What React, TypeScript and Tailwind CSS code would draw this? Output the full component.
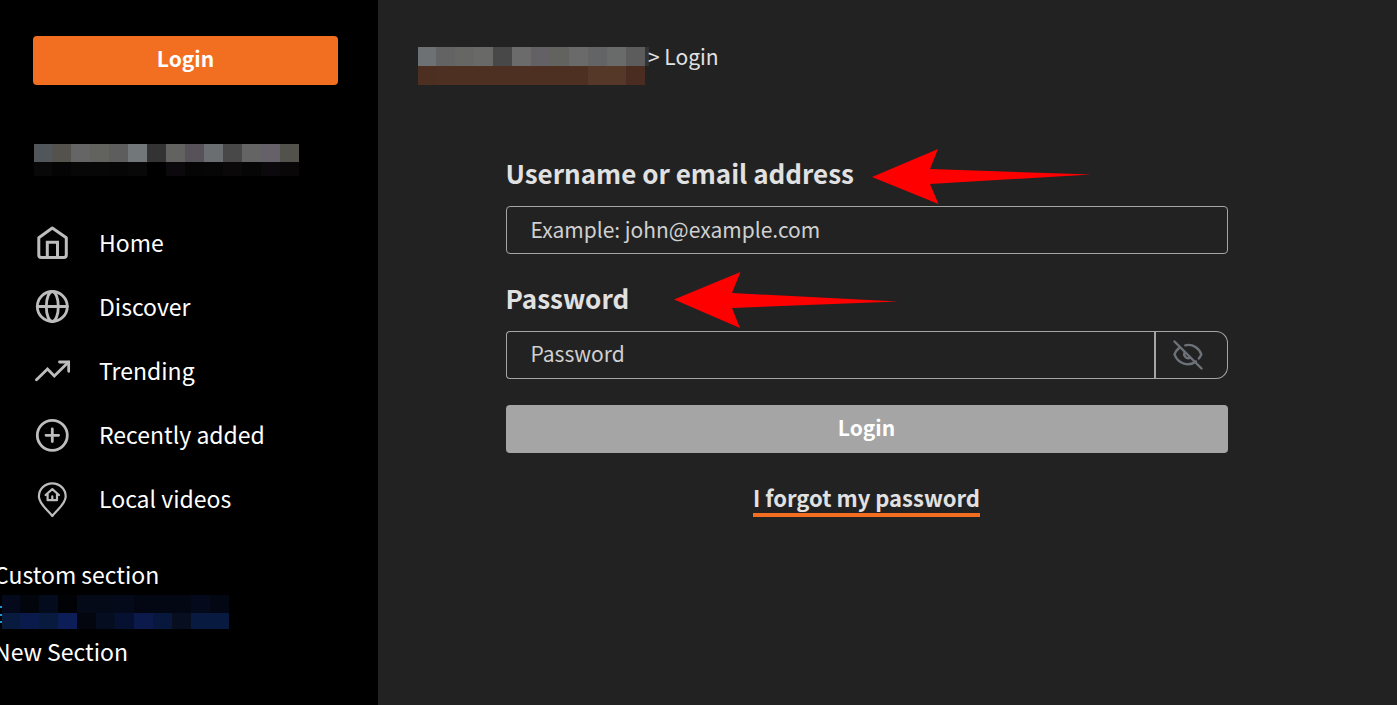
import { useState, type ReactNode } from 'react';

type NavItem = {
  label: string;
  icon: ReactNode;
};

const NAV_ITEMS: NavItem[] = [
  {
    label: 'Home',
    icon: (
      <g strokeWidth="3">
        <path d="M18.3 3 32.3 12.8V30a2.6 2.6 0 0 1-2.6 2.6H7.4A2.6 2.6 0 0 1 4.8 30V12.8Z" />
        <path d="M13.3 32.6V17.2h10.2v15.4" strokeLinejoin="miter" />
      </g>
    ),
  },
  {
    label: 'Discover',
    icon: (
      <g strokeWidth="2.8">
        <circle cx="18.3" cy="17.5" r="15" />
        <ellipse cx="18.3" cy="17.5" rx="6" ry="15" />
        <path d="M3.3 17.5h30" />
      </g>
    ),
  },
  {
    label: 'Trending',
    icon: (
      <g strokeWidth="2.8" strokeLinejoin="miter">
        <path d="M2.5 26.8 13.5 16l6.8 7L34.3 9.3" />
        <path d="M25.5 9h9.2v9.3" />
      </g>
    ),
  },
  {
    label: 'Recently added',
    icon: (
      <g strokeWidth="2.8">
        <circle cx="18.3" cy="18.3" r="15" />
        <path d="M18.3 12v12.6M12 18.3h12.6" />
      </g>
    ),
  },
  {
    label: 'Local videos',
    icon: (
      <g strokeWidth="2.2">
        <path d="M18.3 35C14.5 29.600 4.9 23 4.9 15.400a13.4 13.1 0 0 1 26.8 0c0 7.6-9.6 14.200-13.4 19.600Z" />
        <path d="m11.6 14 6.7-5.8 6.7 5.8M13.6 12.5v6.7h9.4v-6.7M18.3 19v-3.6" />
      </g>
    ),
  },
];

const ACCOUNT_MOSAIC = [
  ['#50565a', '#54524c', '#656565', '#62625f', '#5d5d5d', '#72777a', '#333333', '#626261', '#57515a', '#6b6e70', '#484848', '#646464', '#666169', '#53514c'],
  ['#080808', '#040404', '#070707', '#070707', '#060606', '#080808', '#000000', '#0b090b', '#050505', '#060606', '#0a0809', '#060606', '#0b090b', '#090708'],
];

const SECTION_MOSAIC = [
  ['#040a1b', '#02050c', '#040b1c', '#010206', '#040a18', '#040a18', '#050a1a', '#030613', '#030613', '#030613', '#040a1b', '#030613'],
  ['#081a3e', '#0a1a4a', '#081a3e', '#0d1d57', '#03050f', '#050d20', '#061030', '#0b1a4a', '#08183c', '#060e20', '#081a40', '#081a40'],
];

const SITE_MOSAIC = [
  ['#6d7174', '#636363', '#666664', '#696968', '#484849', '#6b6b6b', '#646166', '#62625e', '#6a6a6a', '#626466', '#696b6b', '#5c5c5c'],
  ['#4c2f20', '#4d3021', '#4d3021', '#4d3021', '#4d3021', '#4d3021', '#4d3021', '#4d3021', '#4d3021', '#553828', '#553828', '#4a2d20'],
];

type MosaicProps = {
  rows: string[][];
  heights: number[];
  children?: ReactNode;
};

function Mosaic({ rows, heights, children }: MosaicProps) {
  // the first column is one pixel narrower than the others
  const width = rows[0].length * 19 - 1;
  const height = heights[0] + heights[1];

  return (
    <svg width={width} height={height} className="block shrink-0 overflow-visible" shapeRendering="crispEdges" aria-hidden="true">
      {rows.map((row, r) =>
        row.map((fill, c) => (
          <rect
            key={`${r}-${c}`}
            x={c === 0 ? 0 : c * 19 - 1}
            y={r === 0 ? 0 : heights[0]}
            width={c === 0 ? 18 : 19}
            height={heights[r]}
            fill={fill}
          />
        )),
      )}
      {children}
    </svg>
  );
}

function Sidebar() {
  return (
    <aside className="w-[378px] shrink-0 overflow-hidden bg-black pt-9 text-white">
      <div className="pr-10 pl-[33px]">
        <button type="button" className="h-[49px] w-full rounded bg-[#f26f21] pb-1.5 text-[21px] leading-8 font-semibold">
          Login
        </button>
      </div>

      <div className="mt-[59px] pl-[34px]">
        <Mosaic rows={ACCOUNT_MOSAIC} heights={[18, 14]} />
      </div>

      <nav className="mt-[35px]">
        {NAV_ITEMS.map(item => (
          <a key={item.label} href="#" className="flex h-16 items-center gap-[29px] pl-[34px] text-[23px] leading-9">
            <svg
              width="36"
              height="36"
              viewBox="0 0 36 36"
              fill="none"
              stroke="#bdbdbd"
              strokeLinecap="round"
              strokeLinejoin="round"
              aria-hidden="true"
            >
              {item.icon}
            </svg>
            <span className="pb-0.5">{item.label}</span>
          </a>
        ))}
      </nav>

      <div className="mt-[25px] text-[23px] leading-9">
        <p className="-ml-1.5">Custom section</p>
        <div className="mt-[3px] mb-1 pl-0.5">
          <Mosaic rows={SECTION_MOSAIC} heights={[18, 16]}>
            <path d="M-2 11h2v2h-2zM-2 19h2v2h-2zM-2 26h2v2h-2z" fill="#1c9ad6" />
          </Mosaic>
        </div>
        <p className="-ml-1.5">New Section</p>
      </div>
    </aside>
  );
}

export default function App() {
  const [username, setUsername] = useState('');
  const [password, setPassword] = useState('');
  const [visible, setVisible] = useState(false);

  return (
    <div className="flex min-h-screen bg-[#222222] font-['Noto_Sans_CJK_JP',sans-serif] text-[#e1e1e1]">
      <Sidebar />

      <main className="min-w-0 flex-1 pt-[38px] pr-[82px] pl-10">
        <div className="flex h-[46px] items-start text-[21px] leading-9">
          <div className="pt-[9px]">
            <Mosaic rows={SITE_MOSAIC} heights={[19, 19]}>
              <rect x="227" width="4" height="19" fill="#333333" />
            </Mosaic>
          </div>
          <span className="pl-[3px]">&gt; Login</span>
        </div>

        <form className="mx-auto mt-[71px] max-w-[722px]" onSubmit={e => e.preventDefault()}>
          <div className="relative w-fit">
            <label htmlFor="username" className="block text-[26px] leading-9 font-bold">
              Username or email address
            </label>
            <svg width="220" height="57" className="absolute -top-[7px] left-full ml-[18px]" fill="#ff0000" aria-hidden="true">
              <path d="M0 29 66 1 58 21 219 26.500 58 36 66.500 56Z" />
            </svg>
          </div>
          <input
            id="username"
            type="text"
            value={username}
            onChange={e => setUsername(e.target.value)}
            placeholder="Example: john@example.com"
            className="mt-[15px] block h-12 w-full rounded border border-[#a5a5a5] px-6 pb-0.5 text-[21px] placeholder:text-[#d0d0d0]"
          />

          <div className="relative mt-[26px] w-fit">
            <label htmlFor="password" className="block text-[26px] leading-9 font-bold">
              Password
            </label>
            <svg width="225" height="57" className="absolute -top-[9px] left-full ml-[45px]" fill="#ff0000" aria-hidden="true">
              <path d="M0 28.500 66.500 1 58 22 224 30.500 58 37 66 57Z" />
            </svg>
          </div>
          <div className="mt-[15px] flex h-12">
            <input
              id="password"
              type={visible ? 'text' : 'password'}
              value={password}
              onChange={e => setPassword(e.target.value)}
              placeholder="Password"
              className="min-w-0 flex-1 rounded-l border border-r-0 border-[#a5a5a5] px-6 pb-0.5 text-[21px] placeholder:text-[#d0d0d0]"
            />
            <button
              type="button"
              aria-label="Show password"
              onClick={() => setVisible(v => !v)}
              className="flex w-[74px] items-center justify-center rounded-r-xl border border-l-2 border-[#a5a5a5] pr-1.5"
            >
              <svg width="30" height="30" viewBox="0 0 30 30" fill="none" stroke="#6d7279" strokeWidth="2.4" strokeLinecap="round" aria-hidden="true">
                <path d="M1.500 1.500 28.500 28.500" />
                <path d="M12.300 5.300C20 3.500 26.300 8.500 28.300 14.300c-.6 1.700-1.400 2.900-2.500 4.200" />
                <path d="M5.800 8.300C3.700 10 2.300 12 1.500 14.300c3.500 9.800 14.500 12.500 21.500 7.200" />
                <path d="M11.800 12.200a4 4 0 0 0 5.400 5.500" />
              </svg>
            </button>
          </div>

          <button type="submit" className="mt-[26px] block h-12 w-full rounded bg-[#a5a5a5] pb-1 text-[21px] leading-8 font-semibold text-white">
            Login
          </button>

          <div className="mt-7 flex justify-center">
            <a href="#" className="border-b-4 border-[#f26f21] text-[22px] leading-8 font-semibold">
              I forgot my password
            </a>
          </div>
        </form>
      </main>
    </div>
  );
}
